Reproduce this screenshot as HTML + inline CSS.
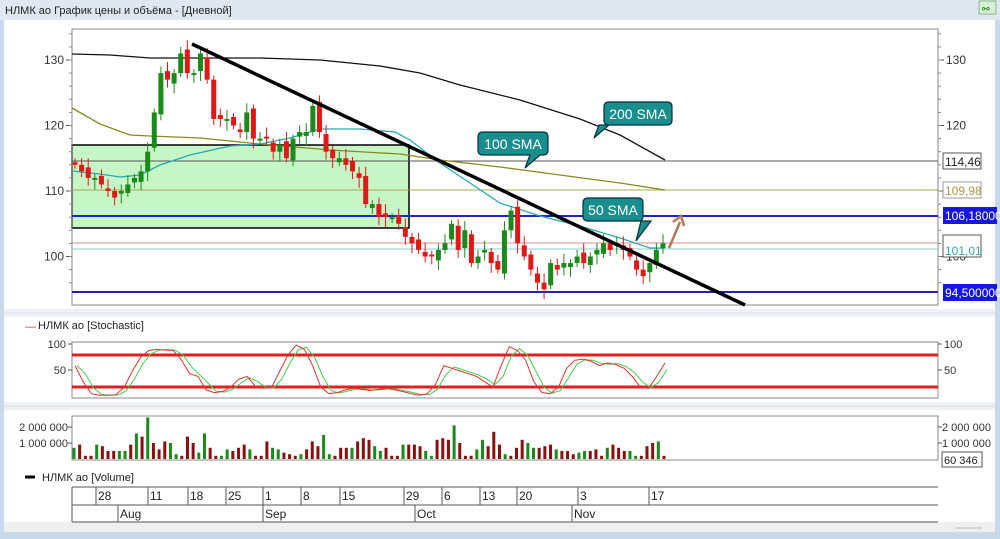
<!DOCTYPE html>
<html><head><meta charset="utf-8"><style>
html,body{margin:0;padding:0;width:1000px;height:539px;overflow:hidden;background:#c9d9ec;font-family:"Liberation Sans",sans-serif}
svg{display:block}
</style></head><body>
<svg id="s" width="1000" height="539" xmlns="http://www.w3.org/2000/svg" font-family="Liberation Sans, sans-serif">
<rect x="0" y="0" width="1000" height="539" fill="#c9d9ec"/>
<rect x="0" y="0" width="1000" height="20" fill="#dfe7f0"/>
<text x="5" y="14" font-size="11" fill="#222">НЛМК ао График цены и объёма - [Дневной]</text>
<rect x="979" y="1" width="17" height="13" fill="#d6f0d6" stroke="#7a7" stroke-width="0.8"/>
<text x="982" y="12" font-size="9" fill="#060">⚯</text>
<rect x="4" y="20" width="991" height="512" fill="#fff"/>
<rect x="4" y="522" width="991" height="10" fill="#efefef"/>
<line x1="955" y1="528" x2="982" y2="528" stroke="#bbb" stroke-width="1"/>
<rect x="4" y="309" width="991" height="8" fill="#eef1f5"/>
<rect x="4" y="402" width="991" height="8" fill="#eef1f5"/>
<line x1="4" y1="313" x2="995" y2="313" stroke="#d8dde4"/>
<line x1="4" y1="406" x2="995" y2="406" stroke="#d8dde4"/>
<g id="main"></g>
</svg>
<script>
var g=document.getElementById('main'),h='';
function Y(p){return 60+(130-p)*6.55}
function ln(x1,y1,x2,y2,c,w){h+='<line x1="'+x1+'" y1="'+y1+'" x2="'+x2+'" y2="'+y2+'" stroke="'+c+'" stroke-width="'+(w||1)+'"/>'}
function tx(x,y,t,s,c,a){h+='<text x="'+x+'" y="'+y+'" font-size="'+(s||11)+'" fill="'+(c||'#222')+'"'+(a?' text-anchor="'+a+'"':'')+'>'+t+'</text>'}
h+='<rect x="72" y="145" width="337" height="83" fill="#c6f5c6" stroke="#000" stroke-width="1.5"/>';
h+='<rect x="72" y="29" width="866" height="276" fill="none" stroke="#888"/>';
[130,120,110,100].forEach(function(p){var y=Y(p);ln(66,y,72,y,'#555');ln(938,y,944,y,'#555');tx(64,y+4,p,12,'#333','end');tx(946,y+4,p,12,'#333');});
for(var p=96;p<=134;p+=2){var y=Y(p);ln(69,y,72,y,'#888');ln(938,y,941,y,'#888');}
ln(72,161,938,161,'#555');ln(72,190,938,190,'#aaa855');ln(72,216,938,216,'#2222cc',2);ln(72,243,938,243,'#e88',1);ln(72,249,938,249,'#8cc',1);ln(72,292,938,292,'#2222aa',2);
h+='<rect x="943" y="153" width="38" height="16" fill="#fff" stroke="#555"/>';tx(945,166,'114,46',12,'#222');
h+='<rect x="943" y="182" width="38" height="16" fill="#fff" stroke="#999"/>';tx(945,195,'109,98',12,'#aa9940');
h+='<rect x="943" y="207" width="54" height="17" fill="#1616e0"/>';tx(945,220,'106,18000',12,'#fff');
h+='<rect x="943" y="235" width="38" height="22" fill="#fff" stroke="#555"/>';tx(945,255,'101,01',12,'#3aa');
h+='<rect x="943" y="284" width="54" height="17" fill="#1616e0"/>';tx(945,297,'94,500000',12,'#fff');
h+='<polyline fill="none" stroke="#111" stroke-width="1.3" points="72,54 110,55 150,58 200,58 260,58 320,60 380,66 420,73 460,85 520,100 580,119 620,135 665,160"/>';
h+='<polyline fill="none" stroke="#888a20" stroke-width="1.3" points="72,108 100,124 130,135 150,136 200,138 260,144 330,150 400,154 440,160 500,167 560,175 620,183 665,190"/>';
h+='<polyline fill="none" stroke="#2aa8b8" stroke-width="1.3" points="72,171 100,174 120,177 140,175 160,165 190,155 230,146 260,144 290,138 320,129 360,129 395,132 410,140 440,163 470,183 500,203 540,216 580,226 620,238 650,248 665,248"/>';
var c=[114,113,112,112,111,110,109,110,111,112,113,116,122,128,127,128,131,128,128,131,127,121,121,121,120,119,122,118,118,118,116,117,115,118,119,119,123,119,116,115,115,114,113,112,108,108,106,106,106,105,103,102,101,100,100,101,102,105,101,104,99,100,101,99,98,104,107,102,100,98,96,95,99,98,99,99,100,99,100,101,102,101,102,101,100,98,97,99,101,102];
var n=c.length,x0=75,dx=(663-75)/(n-1);
for(var i=0;i<n;i++){var x=x0+i*dx,cl=c[i],op=(i==0?115:c[i-1])+((i*7)%5-2)*0.3,up=cl>=op;var col=up?'#1a8a1a':'#e01818';var hi=Math.max(op,cl)+0.6+(i%3)*0.4,lo=Math.min(op,cl)-0.6-(i%4)*0.3;
ln(x,Y(hi),x,Y(lo),col,1);var t=Y(Math.max(op,cl)),b=Y(Math.min(op,cl));h+='<rect x="'+(x-2.5)+'" y="'+t+'" width="5" height="'+Math.max(1.5,b-t)+'" fill="'+col+'"/>';}
ln(192,44,745,305,'#000',3.5);
h+='<line x1="669" y1="248" x2="680" y2="222" stroke="#b07a5a" stroke-width="2.5"/><polyline points="673,222 681,216 684,226" fill="none" stroke="#b07a5a" stroke-width="2.5"/>';
function co(x,y,w,t,px,py){h+='<path d="M'+(x+5)+','+y+' h'+(w-10)+' q5,0 5,5 v13 q0,5 -5,5 H'+(px+15)+' L'+px+','+py+' L'+(px+5)+','+(y+23)+' H'+(x+5)+' q-5,0 -5,-5 v-13 q0,-5 5,-5z" fill="#1a8d8d" stroke="#034" stroke-width="1.2"/>';tx(x+w/2,y+17,t,14,'#fff','middle');}
co(604,102,68,'200 SMA',594,138);co(478,132,70,'100 SMA',525,168);co(583,198,60,'50 SMA',636,241);
tx(25,330,'— ',11,'#d33');tx(38,329,'НЛМК ао [Stochastic]',11,'#222');
h+='<rect x="72" y="342" width="866" height="56" fill="none" stroke="#888"/>';
ln(72,355,938,355,'#e02020',3);ln(72,387,938,387,'#e02020',3);
[[100,344],[50,370]].forEach(function(a){tx(66,a[1]+4,a[0],11,'#333','end');tx(944,a[1]+4,a[0],11,'#333');ln(68,a[1],72,a[1],'#555');ln(938,a[1],942,a[1],'#555');});
var st=[60,30,8,5,5,6,20,50,75,88,90,89,88,70,45,40,15,10,12,20,35,40,22,18,20,50,80,98,90,60,20,8,10,15,18,16,14,16,18,15,12,8,5,8,25,60,55,50,45,40,30,20,60,95,88,70,30,10,8,20,55,70,72,68,60,65,62,55,40,20,18,40,65];
var d1='',d2='';for(var i=0;i<st.length;i++){var x=75+i*(590/(st.length-1));var yy=398-st[i]*0.54;d1+=x+','+yy+' ';var s2=i>0?(st[i]+st[i-1])/2:st[i];d2+=(x+2)+','+(398-s2*0.54)+' ';}
h+='<polyline points="'+d2+'" fill="none" stroke="#4c4" stroke-width="1"/><polyline points="'+d1+'" fill="none" stroke="#d33" stroke-width="1"/>';
h+='<rect x="72" y="416" width="866" height="44" fill="none" stroke="#888"/>';
tx(68,431,'2 000 000',11,'#333','end');tx(68,447,'1 000 000',11,'#333','end');tx(942,431,'2 000 000',11,'#333');tx(942,447,'1 000 000',11,'#333');
ln(68,427,72,427,'#555');ln(68,443,72,443,'#555');ln(938,427,942,427,'#555');ln(938,443,942,443,'#555');
h+='<rect x="942" y="452" width="40" height="15" fill="#fff" stroke="#555"/>';tx(944,464,'60 346',11,'#222');
var vv=[0.7,0.9,0.2,0.2,0.9,0.8,0.5,0.5,0.5,0.5,0.9,1.6,1.4,2.6,1,0.6,1.1,1,0.3,0.2,1.4,1,0.4,1.6,0.7,0.2,0.2,0.6,0.5,0.7,0.9,0.6,0.2,0.2,1.1,0.7,0.6,0.4,0.3,0.2,0.3,0.6,1.1,0.8,1.5,0.3,0.2,0.7,0.7,0.7,1.1,1.3,1.2,0.8,0.5,0.7,0.2,0.2,0.9,0.9,0.9,0.8,0.5,0.2,1.2,1.3,1.2,2.1,1,0.2,0.2,0.6,1.2,0.8,1.7,0.9,0.3,0.2,0.7,1.2,1,0.7,0.7,0.8,0.9,0.6,0.5,0.5,0.3,0.4,0.5,0.5,0.6,0.2,0.7,0.9,0.7,0.5,0.5,0.2,0.2,0.8,1,1.1,0.2];
for(var i=0;i<vv.length;i++){var x=74+i*(590/(vv.length-1));var col=(i*5+Math.floor(i/3))%3==0?'#1a8a1a':'#8a1010';if(vv[i]>1.3&&i%2)col='#1a8a1a';h+='<rect x="'+(x-1.5)+'" y="'+(459-vv[i]*16)+'" width="3" height="'+(vv[i]*16)+'" fill="'+col+'"/>';}
ln(25,477,35,477,'#000',3);tx(42,481,'НЛМК ао [Volume]',11,'#222');
ln(72,487,938,487,'#555');ln(72,505,938,505,'#555');ln(72,522,938,522,'#555');ln(72,487,72,522,'#555');
[[98,'28'],[150,'11'],[190,'18'],[228,'25'],[265,'1'],[303,'8'],[342,'15'],[406,'29'],[444,'6'],[482,'13'],[519,'20'],[580,'3'],[651,'17']].forEach(function(a){ln(a[0]-2,487,a[0]-2,505,'#555');tx(a[0],500,a[1],12,'#222');});
[[120,'Aug'],[265,'Sep'],[417,'Oct'],[574,'Nov']].forEach(function(a){ln(a[0]-2,505,a[0]-2,522,'#555');tx(a[0],518,a[1],12,'#222');});
g.innerHTML=h;
</script>
</body></html>
